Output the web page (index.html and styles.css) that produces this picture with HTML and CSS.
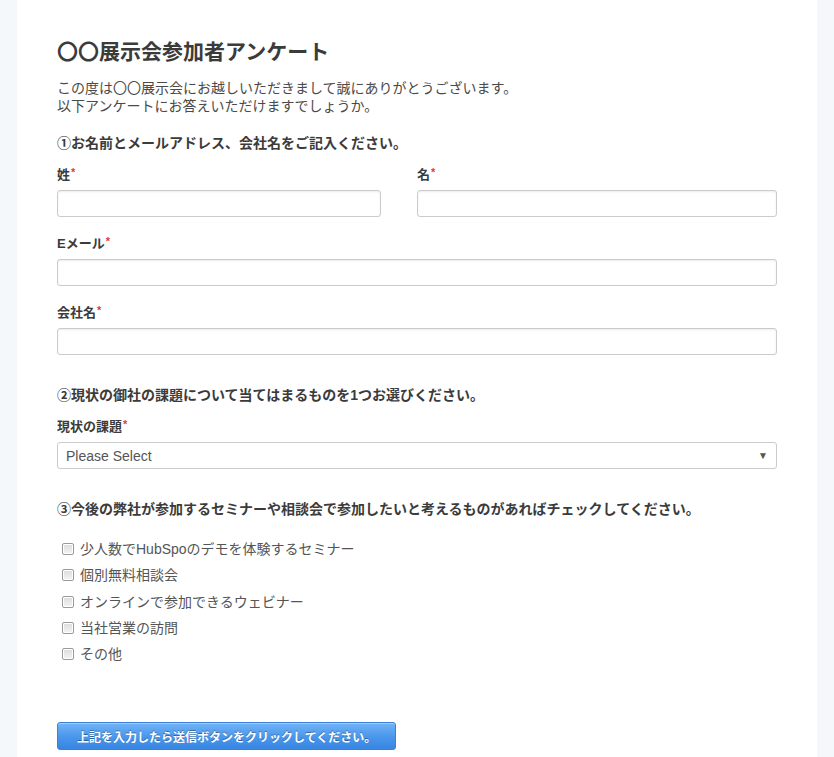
FILE: index.html
```html
<!DOCTYPE html>
<html lang="ja">
<head>
  <meta charset="UTF-8">
  <meta name="viewport" content="width=device-width, initial-scale=1.0">
  <title>〇〇展示会参加者アンケート</title>
  <link rel="stylesheet" href="styles.css">
</head>
<body>
  <div class="page">
    <h1 class="form-title">〇〇展示会参加者アンケート</h1>
    <p class="intro">この度は〇〇展示会にお越しいただきまして誠にありがとうございます。<br>以下アンケートにお答えいただけますでしょうか。</p>

    <form class="survey-form" onsubmit="return false;">
      <div class="section-title">①お名前とメールアドレス、会社名をご記入ください。</div>
      <div class="form-row">
        <div class="form-field half">
          <label for="lastname">姓<span class="req">*</span></label>
          <input class="text-input" type="text" id="lastname">
        </div>
        <div class="form-field half last">
          <label for="firstname">名<span class="req">*</span></label>
          <input class="text-input" type="text" id="firstname">
        </div>
      </div>
      <div class="form-field">
        <label for="email">Eメール<span class="req">*</span></label>
        <input class="text-input" type="email" id="email">
      </div>
      <div class="form-field">
        <label for="company">会社名<span class="req">*</span></label>
        <input class="text-input" type="text" id="company">
      </div>

      <div class="section-title spaced">②現状の御社の課題について当てはまるものを1つお選びください。</div>
      <div class="form-field">
        <label for="issue">現状の課題<span class="req">*</span></label>
        <div class="select-wrap">
          <select class="text-input select-input" id="issue">
            <option>Please Select</option>
          </select>
        </div>
      </div>

      <div class="section-title spaced">③今後の弊社が参加するセミナーや相談会で参加したいと考えるものがあればチェックしてください。</div>
      <ul class="check-list">
        <li><label class="check-item"><input type="checkbox"> 少人数でHubSpoのデモを体験するセミナー</label></li>
        <li><label class="check-item"><input type="checkbox"> 個別無料相談会</label></li>
        <li><label class="check-item"><input type="checkbox"> オンラインで参加できるウェビナー</label></li>
        <li><label class="check-item"><input type="checkbox"> 当社営業の訪問</label></li>
        <li><label class="check-item"><input type="checkbox"> その他</label></li>
      </ul>

      <div class="actions">
        <button class="submit-btn" type="submit">上記を入力したら送信ボタンをクリックしてください。</button>
      </div>
    </form>
  </div>
</body>
</html>
```

FILE: styles.css
```css
body {
  margin: 0;
  background: #f5f8fa;
  font-family: "Liberation Sans", "Noto Sans CJK JP", sans-serif;
  color: #444;
}
.page {
  box-sizing: border-box;
  max-width: 800px;
  margin: 0 auto;
  padding: 39px 40px 20px 40px;
  background: #fff;
  min-height: 100vh;
}
.form-title {
  font-size: 21px;
  font-weight: bold;
  line-height: 26px;
  color: #3b3b3b;
  margin: 0 0 14px 0;
}
.intro {
  font-size: 14px;
  line-height: 18px;
  color: #4a4a4a;
  margin: 0 0 19px 0;
}
.section-title {
  font-size: 14px;
  font-weight: bold;
  line-height: 18px;
  color: #3b3b3b;
  margin-bottom: 14px;
}
.section-title.spaced {
  margin-top: 31px;
}
.form-row {
  display: flex;
}
.form-field {
  margin-bottom: 18px;
}
.form-field.half {
  width: 50%;
}
.form-field.half .text-input {
  width: 90%;
}
.form-field.half.last .text-input {
  width: 100%;
}
.form-field label {
  display: block;
  font-size: 13px;
  font-weight: bold;
  line-height: 18px;
  color: #3b3b3b;
  margin-bottom: 6px;
}
.req {
  color: #e3383f;
  font-size: 11px;
  vertical-align: top;
  line-height: 12px;
  margin-left: 1px;
}
.text-input {
  display: block;
  box-sizing: border-box;
  width: 100%;
  height: 27px;
  margin: 0;
  padding: 0 8px;
  border: 1px solid #cbcbcb;
  border-radius: 3px;
  background: #fff;
  box-shadow: inset 0 1px 2px rgba(0,0,0,0.08);
  font-family: inherit;
  font-size: 14px;
  color: #555;
  outline: none;
}
.select-wrap {
  position: relative;
}
.select-input {
  appearance: none;
  -webkit-appearance: none;
  box-shadow: none;
}
.select-wrap::after {
  content: "▼";
  position: absolute;
  right: 9px;
  top: 8px;
  font-size: 10px;
  line-height: 11px;
  color: #555;
  pointer-events: none;
}
.check-list {
  list-style: none;
  margin: 22px 0 0 0;
  padding: 0 0 0 5px;
}
.check-list li {
  height: 18px;
  margin-bottom: 8.3px;
}
.check-item {
  display: flex;
  align-items: center;
  gap: 6px;
  font-size: 14px;
  line-height: 18px;
  color: #555;
}
.check-item input {
  appearance: none;
  -webkit-appearance: none;
  width: 12px;
  height: 12px;
  margin: 0;
  border: 1px solid #9a9a9a;
  border-radius: 2px;
  background: linear-gradient(#dcdcdc, #f4f4f4);
  box-shadow: inset 0 0 0 1px #fff;
}
.actions {
  margin-top: 59px;
}
.submit-btn {
  height: 28px;
  padding: 0 19px;
  border: 1px solid #3b7fd6;
  border-radius: 3px;
  background: linear-gradient(#72b4f7 0%, #4c98ec 50%, #3785e2 100%);
  color: #fff;
  font-family: "Liberation Sans", "Noto Sans CJK JP", sans-serif;
  font-size: 12px;
  font-weight: bold;
  text-shadow: 0 -1px 0 rgba(0,0,0,0.35);
  box-shadow: inset 0 1px 0 rgba(255,255,255,0.35);
  cursor: pointer;
}
```
